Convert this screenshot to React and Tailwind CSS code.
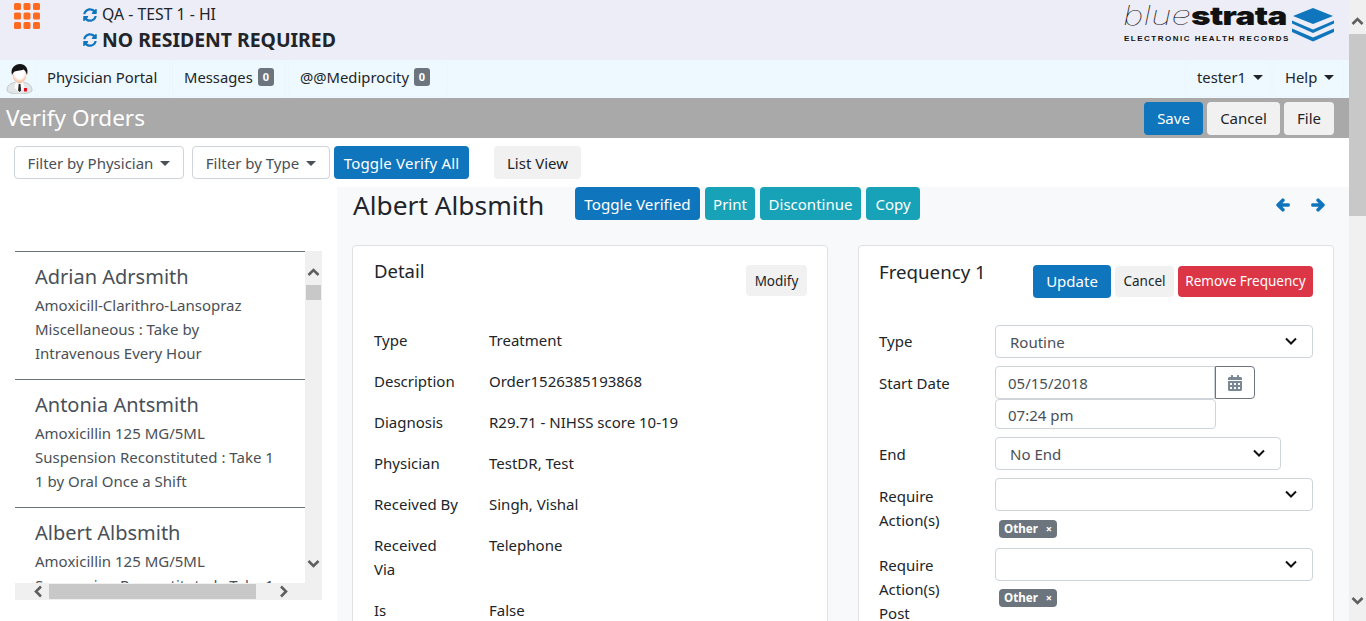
import React from 'react';
import { FaSyncAlt, FaCalendarAlt, FaArrowLeft, FaArrowRight } from 'react-icons/fa';

const Chevron = ({ className }) => (
  <svg className={className} width="12" height="8" viewBox="0 0 12 8" fill="none" stroke="currentColor" strokeWidth="2">
    <path d="M1 1.5l5 5 5-5" />
  </svg>
);

const ScrollArrow = ({ d, className }) => (
  <svg className={className} width="13" height="13" viewBox="0 0 13 13" fill="none" stroke="#5f5f5f" strokeWidth="2.6">
    <path d={d} />
  </svg>
);

const Caret = () => (
  <span className="inline-block ml-[7px] align-[2px] border-t-[5px] border-x-[5px] border-x-transparent border-t-current" />
);

const Tab = ({ children, className }) => (
  <div className={`h-[36px] pb-[4px] flex items-center border border-[#eaf5fd] rounded-[4px] text-[14.8px] ${className}`}>{children}</div>
);

const Badge = ({ children }) => (
  <span className="ml-[5px] w-[16px] h-[18px] flex items-center justify-center bg-[#6c757d] rounded-[3px] text-white text-[11px] font-bold">{children}</span>
);

const Btn = ({ children, className }) => (
  <button className={`flex items-center justify-center rounded-[4px] ${className}`}>{children}</button>
);

const Select = ({ children, className }) => (
  <div className={`h-[33px] pl-[14px] pr-[15px] flex items-center justify-between border border-[#ced4da] rounded-[4px] bg-white text-[#495057] ${className}`}>
    <span className="pt-[1px]">{children}</span>
    <Chevron className="text-[#111] mb-[2px]" />
  </div>
);

const Chip = () => (
  <span className="inline-flex items-center w-[58px] h-[18px] pl-[5px] bg-[#6c757d] rounded-[4px] text-white text-[11.6px] font-bold">
    Other<span className="ml-[8px] text-[11px]">×</span>
  </span>
);

const Patient = ({ name, lines }) => (
  <div className="h-[128px] pl-[20px] pt-[11px] border-t border-[#6c757d] text-[#495057] w-[290px] shrink-0">
    <div className="text-[20px] leading-[28px] mb-[2px]">{name}</div>
    {lines.map((l) => (
      <div key={l} className="leading-[24px] whitespace-nowrap">{l}</div>
    ))}
  </div>
);

const DetailRow = ({ label, value }) => (
  <div className="flex mb-[17px] leading-[24px]">
    <div className="w-[115px] shrink-0">{label}</div>
    <div>{value}</div>
  </div>
);

export default function App() {
  return (
    <div className="h-[621px] w-[1366px] flex overflow-hidden bg-white text-[#212529] text-[15px] font-['Noto_Sans',sans-serif]">
      <div className="w-[1349px] shrink-0 flex flex-col">
        {/* top header */}
        <div className="h-[60px] shrink-0 bg-[#ecedf6] flex">
          <svg className="ml-[14px] mt-[3px]" width="26" height="26" viewBox="0 0 26 26" fill="#ff6a21">
            {[0, 9.5, 19].map((y) =>
              [0, 9.5, 19].map((x) => <rect key={`${x}-${y}`} x={x} y={y} width="7" height="7" rx="1.5" />)
            )}
          </svg>
          <div className="ml-[43px] pt-[4px]">
            <div className="flex items-center h-[22px] text-[15.8px]">
              <FaSyncAlt className="text-[#0f75bc] w-[14px] h-[14px] mr-[5px]" />
              QA - TEST 1 - HI
            </div>
            <div className="flex items-center h-[28px] text-[19.4px] font-bold">
              <FaSyncAlt className="text-[#0f75bc] w-[14px] h-[14px] mr-[5px]" />
              NO RESIDENT REQUIRED
            </div>
          </div>
          <div className="ml-auto mr-[15px] mt-[8px] flex">
            <div className="w-[169px]">
              <div className="h-[21px] flex items-end text-[#111] font-['Inter',sans-serif] leading-none">
                <span className="inline-block w-[68px] origin-left scale-x-[1.3] font-thin italic text-[27px]">blue</span>
                <span className="inline-block w-[94px] origin-left scale-x-[1.28] font-black text-[26px] tracking-[-0.5px]">strata</span>
              </div>
              <div className="text-[8px] font-bold tracking-[1.5px] leading-[10px] mt-[5px] ml-[1px] text-[#111] whitespace-nowrap font-['Liberation_Sans',sans-serif]">ELECTRONIC HEALTH RECORDS</div>
            </div>
            <svg width="42" height="34" viewBox="0 0 42 34" fill="#0f75bc">
              <path d="M21 0l20 8-20 8L1 8z" />
              <path d="M0 12.5l21 9 21-9v3L21 25 0 15.5z" />
              <path d="M0 20.5l21 9 21-9v3.5L21 33.5 0 24z" />
            </svg>
          </div>
        </div>

        {/* nav */}
        <div className="h-[38px] shrink-0 bg-[#eef8ff] flex items-center pl-[6px] pr-[5px]">
          <svg className="mr-[2px]" width="27" height="30" viewBox="0 0 27 30">
            <defs>
              <radialGradient id="face" cx="0.5" cy="0.4" r="0.6">
                <stop offset="0.55" stopColor="#fff" />
                <stop offset="1" stopColor="#f6b48c" />
              </radialGradient>
            </defs>
            <path d="M1 26c0-6 6-8 12.500-8S26 20 26 26v1c-3 2.500-8 3-12.500 3S4 29.500 1 27z" fill="#e3e6e6" stroke="#b4baba" strokeWidth="0.7" />
            <path d="M10 17.500l3.500 3 3.500-3 1.500 6-5 5.500-5-5.500z" fill="#fff" />
            <path d="M12.700 20h1.800l.7 6.500-1.600 1.500-1.600-1.500z" fill="#2a2a2a" />
            <rect x="18" y="24" width="3" height="3.500" fill="#e01020" />
            <ellipse cx="13.500" cy="10.500" rx="7" ry="8.500" fill="url(#face)" />
            <path d="M6 11C4 4 9 0 14 0s9 4 7 11c-1-3-2-5-3.500-5.500C15 7 9 6.500 8 8c-1 .8-1.500 2-2 3z" fill="#151515" />
          </svg>
          <Tab className="w-[135px] pl-[11px]">Physician Portal</Tab>
          <Tab className="w-[114px] ml-[2px] pl-[11px]">Messages<Badge>0</Badge></Tab>
          <Tab className="w-[160px] ml-[2px] pl-[11px]">@@Mediprocity<Badge>0</Badge></Tab>
          <Tab className="w-[86px] ml-auto pl-[11px]">tester1<Caret /></Tab>
          <Tab className="w-[71px] ml-[2px] pl-[11px]">Help<Caret /></Tab>
        </div>

        {/* title bar */}
        <div className="h-[40px] shrink-0 bg-[#a9a9a9] flex items-center pl-[6px] pr-[15px]">
          <div className="text-white text-[22.5px]">Verify Orders</div>
          <Btn className="ml-auto w-[59px] h-[33px] bg-[#0f75bc] text-white">Save</Btn>
          <Btn className="ml-[4px] w-[73px] h-[33px] bg-[#f1f1f1]">Cancel</Btn>
          <Btn className="ml-[4px] w-[50px] h-[33px] bg-[#f1f1f1]">File</Btn>
        </div>

        {/* filter row */}
        <div className="h-[49px] shrink-0 flex items-start pt-[8px] pl-[14px]">
          <Btn className="w-[170px] h-[33px] pt-[1px] border border-[#ced4da] text-[#495057]">Filter by Physician<Caret /></Btn>
          <Btn className="ml-[8px] w-[138px] h-[33px] pt-[1px] border border-[#ced4da] text-[#495057]">Filter by Type<Caret /></Btn>
          <Btn className="ml-[4px] w-[135px] h-[33px] pt-[1px] bg-[#0f75bc] text-white tracking-[0.2px]">Toggle Verify All</Btn>
          <Btn className="ml-[25px] w-[87px] h-[33px] pt-[1px] bg-[#f1f1f1]">List View</Btn>
        </div>

        <div className="flex flex-1 min-h-0">
          {/* patient list */}
          <div className="w-[337px] shrink-0 pl-[15px] pt-[64px]">
            <div className="w-[307px] h-[349px] flex flex-col overflow-hidden">
              <div className="flex h-[332px]">
                <div className="w-[290px] h-[332px] overflow-hidden">
                  <Patient name="Adrian Adrsmith" lines={['Amoxicill-Clarithro-Lansopraz', 'Miscellaneous : Take by', 'Intravenous Every Hour']} />
                  <Patient name="Antonia Antsmith" lines={['Amoxicillin 125 MG/5ML', 'Suspension Reconstituted : Take 1', '1 by Oral Once a Shift']} />
                  <Patient name="Albert Albsmith" lines={['Amoxicillin 125 MG/5ML', 'Suspension Reconstituted : Take 1']} />
                </div>
                <div className="w-[17px] bg-[#f0f0f0] flex flex-col items-center">
                  <ScrollArrow className="mt-[15px]" d="M1.500 9l5-5 5 5" />
                  <div className="w-[15px] h-[15px] mt-[6px] bg-[#c8c8c8]" />
                  <ScrollArrow className="mt-auto mb-[13px]" d="M1.500 4l5 5 5-5" />
                </div>
              </div>
              <div className="h-[17px] bg-[#f0f0f0] flex items-center">
                <ScrollArrow className="ml-[17px]" d="M9 1.500l-5 5 5 5" />
                <div className="w-[207px] h-[15px] ml-[4px] bg-[#c8c8c8]" />
                <ScrollArrow className="ml-[21px]" d="M4 1.500l5 5-5 5" />
              </div>
            </div>
          </div>

          {/* order panel */}
          <div className="flex-1 bg-[#f8f9fa] pl-[15px] pr-[15px]">
            <div className="flex items-start h-[58px]">
              <div className="text-[26.300px] leading-[36px] pl-[1px] w-[223px]">Albert Albsmith</div>
              <Btn className="w-[125px] h-[33px] pt-[1px] bg-[#0f75bc] text-white text-[15.200px]">Toggle Verified</Btn>
              <Btn className="ml-[5px] w-[50px] h-[33px] pt-[1px] bg-[#17a2b8] text-white">Print</Btn>
              <Btn className="ml-[5px] w-[101px] h-[33px] pt-[1px] bg-[#17a2b8] text-white">Discontinue</Btn>
              <Btn className="ml-[5px] w-[54px] h-[33px] pt-[1px] bg-[#17a2b8] text-white">Copy</Btn>
              <FaArrowLeft className="ml-auto mt-[11px] w-[14px] h-[14px] text-[#0f75bc]" stroke="currentColor" strokeWidth={50} />
              <FaArrowRight className="ml-[21px] mr-[9px] mt-[11px] w-[14px] h-[14px] text-[#0f75bc]" stroke="currentColor" strokeWidth={50} />
            </div>

            <div className="flex items-start">
              {/* detail card */}
              <div className="w-[476px] h-[500px] shrink-0 bg-white border border-[#dfe1e4] rounded-[4px] pl-[21px] pr-[20px]">
                <div className="flex items-start pt-[11px] h-[82px]">
                  <div className="text-[18.500px] leading-[27px]">Detail</div>
                  <Btn className="ml-auto mt-[8px] w-[61px] h-[31px] pt-[1px] bg-[#f1f1f1] text-[13.500px]">Modify</Btn>
                </div>
                <DetailRow label="Type" value="Treatment" />
                <DetailRow label="Description" value="Order1526385193868" />
                <DetailRow label="Diagnosis" value="R29.71 - NIHSS score 10-19" />
                <DetailRow label="Physician" value="TestDR, Test" />
                <DetailRow label="Received By" value="Singh, Vishal" />
                <DetailRow label={<>Received<br />Via</>} value="Telephone" />
                <DetailRow label="Is" value="False" />
              </div>

              {/* frequency card */}
              <div className="ml-[30px] w-[476px] h-[500px] shrink-0 bg-white border border-[#dfe1e4] rounded-[4px] pl-[20px] pr-[20px]">
                <div className="flex items-start pt-[12px] h-[79px]">
                  <div className="text-[18.700px] leading-[27px]">Frequency 1</div>
                  <Btn className="ml-auto mt-[7px] w-[78px] h-[33px] bg-[#0f75bc] text-white">Update</Btn>
                  <Btn className="ml-[4px] mt-[8px] w-[59px] h-[31px] bg-[#f1f1f1] text-[13.500px]">Cancel</Btn>
                  <Btn className="ml-[4px] mt-[8px] w-[135px] h-[31px] bg-[#dc3545] text-white text-[13.500px]">Remove Frequency</Btn>
                </div>

                <div className="flex h-[41px]">
                  <div className="w-[116px] leading-[33px]">Type</div>
                  <Select className="w-[318px]">Routine</Select>
                </div>
                <div className="flex h-[71px]">
                  <div className="w-[116px] leading-[33px] pt-[1px]">Start Date</div>
                  <div>
                    <div className="flex">
                      <div className="w-[220px] h-[33px] pl-[12px] pt-[1px] flex items-center border border-[#ced4da] rounded-l-[4px] text-[#495057]">05/15/2018</div>
                      <div className="w-[40px] h-[33px] flex items-center justify-center border border-[#6c757d] rounded-r-[4px]">
                        <FaCalendarAlt className="w-[14px] h-[16px] text-[#7a8794]" />
                      </div>
                    </div>
                    <div className="w-[221px] h-[30px] pl-[12px] pt-[2px] flex items-center border border-[#ced4da] rounded-[4px] text-[#495057]">07:24 pm</div>
                  </div>
                </div>
                <div className="flex h-[41px]">
                  <div className="w-[116px] leading-[33px] pt-[1px]">End</div>
                  <Select className="w-[286px]">No End</Select>
                </div>
                <div className="flex h-[70px]">
                  <div className="w-[116px] leading-[24px] pt-[6px]">Require<br />Action(s)</div>
                  <div>
                    <Select className="w-[318px]"></Select>
                    <div className="ml-[4px] mt-[9px] flex"><Chip /></div>
                  </div>
                </div>
                <div className="flex h-[80px]">
                  <div className="w-[116px] leading-[24px] pt-[5px]">Require<br />Action(s)<br />Post</div>
                  <div>
                    <Select className="w-[318px]"></Select>
                    <div className="ml-[4px] mt-[8px] flex"><Chip /></div>
                  </div>
                </div>
              </div>
            </div>
          </div>
        </div>
      </div>

      {/* page scrollbar */}
      <div className="w-[17px] shrink-0 bg-[#f0f0f0] flex flex-col items-center">
        <ScrollArrow className="mt-[15px]" d="M1.500 9l5-5 5 5" />
        <div className="w-[17px] h-[182px] mt-[6px] bg-[#c8c8c8]" />
        <ScrollArrow className="mt-auto mb-[14px]" d="M1.500 4l5 5 5-5" />
      </div>
    </div>
  );
}
